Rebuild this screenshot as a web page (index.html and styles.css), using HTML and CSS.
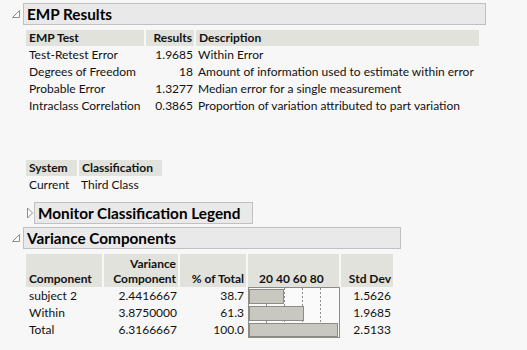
FILE: index.html
```html
<!DOCTYPE html>
<html lang="en">
<head>
  <meta charset="UTF-8" />
  <title>EMP Results</title>
  <link rel="stylesheet" href="styles.css">
</head>
<body>
  <!-- EMP Results outline -->
  <section class="outline">
    <div class="outline-head">
      <svg class="toggle" width="10" height="10" viewBox="0 0 10 10"><path d="M1.5 8.5 L8.5 1.5 L8.5 8.5 Z" fill="#fff" stroke="#8c8c8c"/></svg>
      <div class="title-box emp-title">EMP Results</div>
    </div>
    <div class="outline-body">
      <table class="report emp-table">
        <tr>
          <th class="c-test">EMP Test</th>
          <th class="c-res num">Results</th>
          <th class="c-desc">Description</th>
        </tr>
        <tr><td>Test-Retest Error</td><td class="num">1.9685</td><td>Within Error</td></tr>
        <tr><td>Degrees of Freedom</td><td class="num">18</td><td>Amount of information used to estimate within error</td></tr>
        <tr><td>Probable Error</td><td class="num">1.3277</td><td>Median error for a single measurement</td></tr>
        <tr><td>Intraclass Correlation</td><td class="num">0.3865</td><td>Proportion of variation attributed to part variation</td></tr>
      </table>

      <table class="report class-table">
        <tr>
          <th class="c-sys">System</th>
          <th class="c-cls">Classification</th>
        </tr>
        <tr><td>Current</td><td>Third Class</td></tr>
      </table>

      <div class="outline-head sub">
        <svg class="toggle closed" width="8" height="12" viewBox="0 0 8 12"><path d="M1.5 1 L6.5 6 L1.5 11 Z" fill="#fff" stroke="#8c8c8c"/></svg>
        <div class="title-box legend-title">Monitor Classification Legend</div>
      </div>
    </div>
  </section>

  <!-- Variance Components outline -->
  <section class="outline">
    <div class="outline-head">
      <svg class="toggle" width="10" height="10" viewBox="0 0 10 10"><path d="M1.5 8.5 L8.5 1.5 L8.5 8.5 Z" fill="#fff" stroke="#8c8c8c"/></svg>
      <div class="title-box var-title">Variance Components</div>
    </div>
    <div class="outline-body">
      <table class="report var-table">
        <tr>
          <th class="c-comp">Component</th>
          <th class="c-vc num">Variance<br>Component</th>
          <th class="c-pct num">% of Total</th>
          <th class="c-chart">
            <div class="ticks"><span>20</span><span>40</span><span>60</span><span>80</span></div>
          </th>
          <th class="c-sd num">Std Dev</th>
        </tr>
        <tr>
          <td>subject 2</td><td class="num">2.4416667</td><td class="num">38.7</td>
          <td class="chart-cell" rowspan="3">
            <svg width="92" height="51" viewBox="0 0 92 51">
              <rect x="0.5" y="0.5" width="91" height="50" fill="#fafafa" stroke="#8c8c84"/>
              <g stroke="#8c8c84" stroke-dasharray="2 2">
                <line x1="36.5" y1="1" x2="36.5" y2="50"/>
                <line x1="54.5" y1="1" x2="54.5" y2="50"/>
                <line x1="72.5" y1="1" x2="72.5" y2="50"/>
              </g>
              <g stroke="#8c8c84">
                <line x1="18.5" y1="16" x2="18.5" y2="19"/>
                <line x1="18.5" y1="33" x2="18.5" y2="36"/>
              </g>
              <g fill="#c8c8c0" stroke="#8c8c84">
                <rect x="1.5" y="2.5" width="34" height="14"/>
                <rect x="1.5" y="19.5" width="54" height="14"/>
                <rect x="1.5" y="36.5" width="88" height="13"/>
              </g>
            </svg>
          </td>
          <td class="num">1.5626</td>
        </tr>
        <tr><td>Within</td><td class="num">3.8750000</td><td class="num">61.3</td><td class="num">1.9685</td></tr>
        <tr><td>Total</td><td class="num">6.3166667</td><td class="num">100.0</td><td class="num">2.5133</td></tr>
      </table>
    </div>
  </section>
</body>
</html>
```

FILE: styles.css
```css
body {
  margin: 0;
  padding-top: 3px;
  background: #f7f7f7;
  color: #111;
  font-family: Lato, "Open Sans", sans-serif;
  font-size: 12px;
}

/* outline headers with disclosure icon */
.outline-head {
  display: flex;
  align-items: center;
}
.toggle {
  width: 10px;
  margin: 0 2px 0 11px;
  flex: none;
}
.title-box {
  box-sizing: border-box;
  height: 22px;
  padding: 0 3px;
  background: #e9e9e9;
  border: 1px solid #c0c0c0;
  color: #000;
  font-weight: 700;
  font-size: 15.3px;
  line-height: 20px;
  white-space: nowrap;
}
.emp-title { width: 463px; }
.var-title { width: 378px; }

.outline-body {
  padding: 5px 0 0 26px;
}

.outline-head.sub {
  margin: 9px 0 3px 0;
}
.outline-head.sub .toggle {
  width: 8px;
  margin: 0;
}
.legend-title {
  width: 219px;
}

/* report tables */
.report {
  border-collapse: collapse;
}
.report th,
.report td {
  padding: 0 2px 0 3px;
  height: 17px;
  line-height: 17px;
  text-align: left;
  white-space: nowrap;
}
.report th {
  background: #e2e2dd;
  font-weight: 700;
  height: 16px;
  line-height: 16px;
  vertical-align: bottom;
}
.report th + th {
  border-left: 2px solid #f7f7f7;
}
.report .num {
  text-align: right;
}

.c-test { width: 113px; }
.c-res { width: 43px; }
.c-desc { width: 278px; }

.class-table {
  margin-top: 46px;
}
.c-sys { width: 46px; }
.c-cls { width: 78px; }

.var-table th {
  height: 32px;
  line-height: 15px;
  padding-bottom: 1px;
}
.c-comp { width: 71px; }
.c-vc { width: 69px; }
.c-pct { width: 61px; }
.c-chart { width: 86px; }
.c-sd { width: 47px; }

.ticks {
  display: flex;
  gap: 3px;
  padding-left: 8px;
}

.report td.chart-cell {
  padding: 0;
  vertical-align: top;
  border-left: 2px solid #f7f7f7;
}
.chart-cell svg {
  display: block;
}
```
